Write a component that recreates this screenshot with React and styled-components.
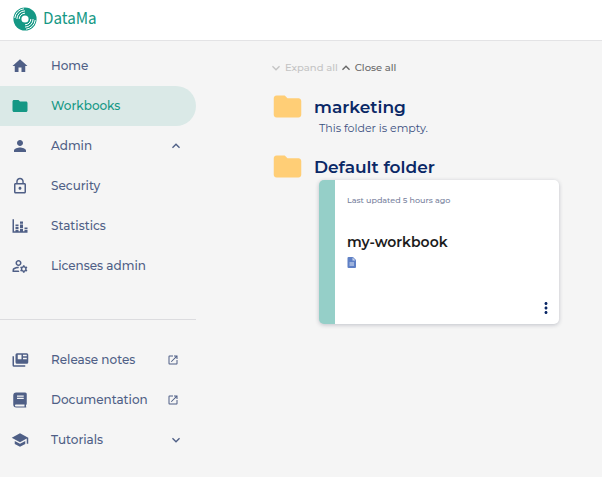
import React from "react";
import styled, { createGlobalStyle } from "styled-components";
import {
  MdHome,
  MdFolder,
  MdPerson,
  MdLockOutline,
  MdOutlineManageAccounts,
  MdSchool,
  MdOpenInNew,
  MdExpandLess,
  MdExpandMore,
  MdMoreVert,
} from "react-icons/md";

const GlobalStyle = createGlobalStyle`
  *, *::before, *::after { box-sizing: border-box; }
  body {
    margin: 0;
    background: #f5f5f5;
    color: #4f5f86;
    font-family: Montserrat, Inter, "Liberation Sans", sans-serif;
  }
  button { font: inherit; color: inherit; border: 0; background: none; padding: 0; cursor: pointer; }
  svg { display: block; flex: none; }
`;

const Page = styled.div`
  min-height: 100vh;
  display: flex;
  flex-direction: column;
`;

const Header = styled.header`
  height: 41px;
  padding: 0 13px 2px;
  display: flex;
  align-items: center;
  background: #fff;
  border-bottom: 1px solid #e3e3e5;
`;

const Brand = styled.a`
  display: flex;
  align-items: center;
  gap: 6px;
  color: #159885;
  font: 400 17px/24px "Source Sans 3", "Source Sans Pro", "Noto Sans CJK SC", "Noto Sans", sans-serif;
  text-decoration: none;
`;

const Body = styled.div`
  flex: 1;
  display: flex;
`;

const Sidebar = styled.nav`
  width: 196px;
  flex: none;
  padding-top: 5px;
`;

const NavList = styled.ul`
  list-style: none;
  margin: 0;
  padding: 0;
`;

const NavItem = styled.a`
  display: flex;
  align-items: center;
  height: 40px;
  padding: 0 15px 1px 11px;
  border-radius: 0 20px 20px 0;
  background: ${(p) => (p.$active ? "#dae9e7" : "transparent")};
  color: ${(p) => (p.$active ? "#159885" : "#4f5f86")};
  font-size: 12px;
  font-weight: 500;
  line-height: 18px;
  text-align: left;
  text-decoration: none;

  button& {
    width: 100%;
    font-size: 12px;
    font-weight: 500;
    color: #4f5f86;
    padding: 0 12px 1px 11px;
  }
`;

const NavLabel = styled.span`
  flex: 1;
  margin-left: 22px;
`;

const LinkMark = styled.span`
  margin-right: 2px;
`;

const Divider = styled.hr`
  margin: 33px 0 20px;
  border: 0;
  border-top: 1px solid #dcdcdf;
`;

const Main = styled.main`
  flex: 1;
  min-width: 0;
  padding: 17px 40px 24px 72px;
`;

const Toolbar = styled.div`
  display: flex;
  padding-bottom: 16px;
`;

const ToolButton = styled.button`
  display: flex;
  align-items: center;
  gap: 1px;
  && {
    font-size: 10px;
    font-weight: 500;
    line-height: 20px;
    color: ${(p) => (p.disabled ? "#c4c4c4" : "#686868")};
  }
`;

const Folder = styled.section`
  padding-bottom: 18px;
`;

const FolderHeading = styled.h2`
  display: flex;
  align-items: center;
  gap: 10px;
  height: 26px;
  margin: 0;
  padding-left: 3px;
  color: #0a2866;
  font-size: 17px;
  font-weight: 600;
  line-height: 26px;

  svg { margin-top: -2px; }
`;

const FolderContent = styled.div`
  margin-left: 51px;
`;

const EmptyNote = styled.p`
  margin: 0;
  color: #3b4f80;
  font-size: 11px;
  line-height: 16px;
`;

const Card = styled.article`
  display: flex;
  flex-direction: column;
  max-width: 240px;
  min-height: 144px;
  padding: 13px 9px 7px 12px;
  border-left: 16px solid #95cfc8;
  border-radius: 5px;
  background: #fff;
  box-shadow: 0 1px 4px rgba(20, 30, 60, 0.24);
`;

const Updated = styled.p`
  margin: 0;
  color: #76809c;
  font-size: 8px;
  font-weight: 500;
  line-height: 14px;
`;

const CardTitle = styled.h3`
  margin: 25px 0 5px;
  color: #1c1c1c;
  font-size: 14px;
  font-weight: 600;
  line-height: 20px;
`;

const CardMenu = styled.button`
  margin-top: auto;
  margin-right: -5px;
  align-self: flex-end;
  && { color: #0a2866; }
`;

function Logo() {
  return (
    <svg width="24" height="24" viewBox="0 0 24 24" aria-hidden="true">
      <circle cx="12" cy="12" r="11.6" fill="#159885" />
      <circle cx="12" cy="12" r="3.6" fill="#fff" />
      <g fill="none" stroke="#fff" strokeWidth="1">
        <path d="M6.2 12A5.8 5.8 0 0 1 12 6.2M3.9 12A8.1 8.1 0 0 1 12 3.9M1.8 11A10.2 10.2 0 0 1 11 1.8" />
        <path d="M17.8 12A5.8 5.8 0 0 1 12 17.8M20.1 12A8.1 8.1 0 0 1 12 20.1M22.2 13A10.2 10.2 0 0 1 13 22.2" />
      </g>
    </svg>
  );
}

function StatsIcon({ size }) {
  return (
    <svg width={size} height={size} viewBox="0 0 24 24" fill="currentColor" aria-hidden="true">
      <path d="M2 3h2v16h2v-2h4v2h2v-3h4v3h2v-2h4v4H2zM18 14h4v2h-4zM12 6h4v3h-4zM12 10h4v5h-4zM6 10h4v2H6zM6 13h4v3H6z" />
    </svg>
  );
}

function NewsIcon({ size }) {
  return (
    <svg width={size} height={size} viewBox="0 0 24 24" fill="currentColor" aria-hidden="true">
      <path d="M2 7h2v12h15v2H4a2 2 0 0 1-2-2z" />
      <path
        fillRule="evenodd"
        d="M8 3h13a2 2 0 0 1 2 2v10a2 2 0 0 1-2 2H8a2 2 0 0 1-2-2V5a2 2 0 0 1 2-2zM9 5v6h5V5zM16 5v2h5V5zM16 9v2h5V9z"
      />
    </svg>
  );
}

function BookIcon({ size }) {
  return (
    <svg width={size} height={size} viewBox="0 0 24 24" fill="currentColor" aria-hidden="true">
      <path
        fillRule="evenodd"
        d="M7 2h12a2 2 0 0 1 2 2v13a2 2 0 0 1-1 1.7V20.5a.8.8 0 0 1 0 1.5H7a4 4 0 0 1-4-4V6a4 4 0 0 1 4-4zM6.5 18a1.2 1.2 0 0 0 0 2.5H18V18zM8 6v1.5h9V6zM8 9v1.5h9V9z"
      />
    </svg>
  );
}

function FileIcon() {
  return (
    <svg width="9" height="11" viewBox="0 0 18 22" aria-hidden="true">
      <path d="M3 0h9l6 6v14a2 2 0 0 1-2 2H3a2 2 0 0 1-2-2V2a2 2 0 0 1 2-2z" fill="#5f80c5" />
      <path d="M11 1v6h6z" fill="#c9d5ee" />
      <path d="M5 11h9v2H5zM5 15h9v2H5z" fill="#dde5f5" />
    </svg>
  );
}

const primary = [
  { label: "Home", icon: MdHome },
  { label: "Workbooks", icon: MdFolder, active: true },
  { label: "Admin", icon: MdPerson, toggle: "open" },
  { label: "Security", icon: MdLockOutline },
  { label: "Statistics", icon: StatsIcon },
  { label: "Licenses admin", icon: MdOutlineManageAccounts },
];

const secondary = [
  { label: "Release notes", icon: NewsIcon, external: true },
  { label: "Documentation", icon: BookIcon, external: true },
  { label: "Tutorials", icon: MdSchool, toggle: "closed" },
];

function NavEntry({ label, icon: Icon, active, toggle, external }) {
  const target = toggle
    ? { as: "button", type: "button", "aria-expanded": toggle === "open" }
    : { href: "#", "aria-current": active ? "page" : undefined };
  return (
    <li>
      <NavItem $active={active} {...target}>
        <Icon size={18} />
        <NavLabel>{label}</NavLabel>
        {external && (
          <LinkMark>
            <MdOpenInNew size={12} />
          </LinkMark>
        )}
        {toggle === "open" && <MdExpandLess size={16} />}
        {toggle === "closed" && <MdExpandMore size={16} />}
      </NavItem>
    </li>
  );
}

export default function App() {
  return (
    <Page>
      <GlobalStyle />
      <Header>
        <Brand href="#">
          <Logo />
          DataMa
        </Brand>
      </Header>
      <Body>
        <Sidebar>
          <NavList>
            {primary.map((item) => (
              <NavEntry key={item.label} {...item} />
            ))}
          </NavList>
          <Divider />
          <NavList>
            {secondary.map((item) => (
              <NavEntry key={item.label} {...item} />
            ))}
          </NavList>
        </Sidebar>
        <Main>
          <Toolbar>
            <ToolButton type="button" disabled>
              <MdExpandMore size={16} />
              Expand all
            </ToolButton>
            <ToolButton type="button">
              <MdExpandLess size={16} />
              Close all
            </ToolButton>
          </Toolbar>
          <Folder>
            <FolderHeading>
              <MdFolder size={33} color="#ffce76" />
              marketing
            </FolderHeading>
            <FolderContent>
              <EmptyNote>This folder is empty.</EmptyNote>
            </FolderContent>
          </Folder>
          <Folder>
            <FolderHeading>
              <MdFolder size={33} color="#ffce76" />
              Default folder
            </FolderHeading>
            <FolderContent>
              <Card>
                <Updated>Last updated 5 hours ago</Updated>
                <CardTitle>my-workbook</CardTitle>
                <FileIcon />
                <CardMenu type="button" aria-label="Workbook options">
                  <MdMoreVert size={18} />
                </CardMenu>
              </Card>
            </FolderContent>
          </Folder>
        </Main>
      </Body>
    </Page>
  );
}
